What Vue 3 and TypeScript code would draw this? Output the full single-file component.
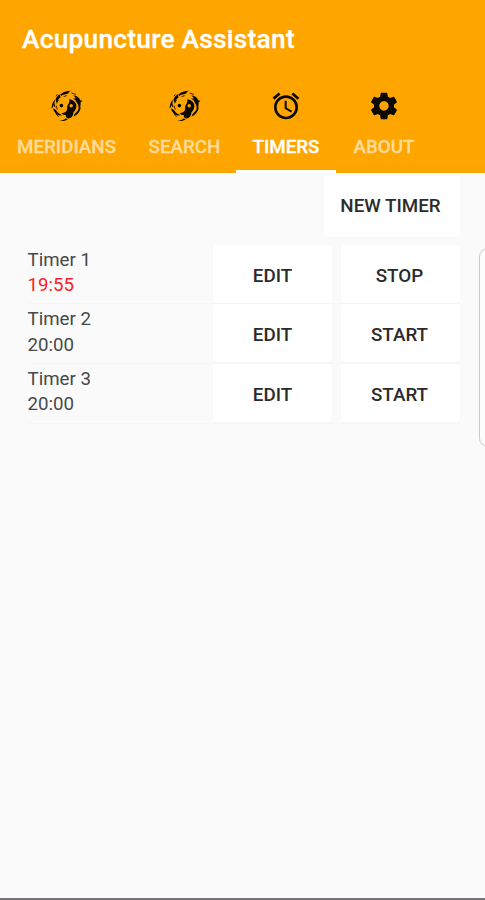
<script setup lang="ts">
import { ref } from 'vue'

type IconName = 'taiji' | 'alarm' | 'gear'

interface Tab {
  id: string
  label: string
  icon: IconName
}

interface Timer {
  name: string
  remaining: string
  running: boolean
}

const tabs: Tab[] = [
  { id: 'meridians', label: 'MERIDIANS', icon: 'taiji' },
  { id: 'search', label: 'SEARCH', icon: 'taiji' },
  { id: 'timers', label: 'TIMERS', icon: 'alarm' },
  { id: 'about', label: 'ABOUT', icon: 'gear' },
]

const activeTab = ref('timers')

const timers = ref<Timer[]>([
  { name: 'Timer 1', remaining: '19:55', running: true },
  { name: 'Timer 2', remaining: '20:00', running: false },
  { name: 'Timer 3', remaining: '20:00', running: false },
])

function addTimer(): void {
  timers.value.push({ name: `Timer ${timers.value.length + 1}`, remaining: '20:00', running: false })
}
</script>

<template>
  <div class="screen">
    <header class="app-bar">
      <h1 class="title">Acupuncture Assistant</h1>
      <nav class="tabs">
        <button
          v-for="tab in tabs"
          :key="tab.id"
          class="tab"
          :class="[tab.id, { active: tab.id === activeTab }]"
          @click="activeTab = tab.id"
        >
          <svg v-if="tab.icon === 'taiji'" class="icon" viewBox="0 0 32 32">
            <path d="M18 9.5C21.5 9.5 24.6 11.6 25.2 14.6C25.8 18 24.4 20.6 22.4 22.4C22.4 25.4 20.6 28 17.6 28.4C15 28.2 14.6 26.4 14.8 25C13 25 11.6 24.6 10.4 23.2C13.8 23.2 16 21.4 16.2 18.8C16.2 17.4 16 16 17 14.4C18.6 12.6 18.8 11 18 9.5Z" />
            <circle class="hole" cx="20.2" cy="15.8" r="1.7" />
            <circle cx="10.4" cy="15.6" r="1.8" />
            <path d="M9.6 4.4C12 2 15.4 1 20.6 0.8C18.2 1.4 17.2 2.4 17.4 3.6C15 4.4 12.6 4.2 9.4 6.4C9.8 5.6 10 5 9.6 4.4Z" />
            <path d="M4.6 9.4C5.4 6.8 7.4 4.6 9.6 4C8.4 5.8 8.8 6.8 10 7C7.6 8.4 6.4 10.2 6.2 12.6C5.2 12 4.6 10.8 4.6 9.4Z" />
            <path d="M0.6 18.6C0.8 14.8 1.8 11.6 4 9.6C3.2 12.6 3.4 15.4 4.6 17.6C3.6 17.2 2.8 16.2 2.4 15C2.2 16.6 1.8 17.8 0.6 18.6Z" />
            <path d="M2 18.4C4.4 19 5.6 20.6 6.4 22C7.6 23.4 9.2 24.4 11.4 25.2L8.2 25.6C5 24.2 2.6 21.6 2 18.4Z" />
            <path d="M22 5.2C25.4 5.4 28.4 7.2 29.2 10.2L31.4 10.8L29.6 12.4C29.8 15.4 29.2 17.4 27.6 19.4C27.8 14.6 26.6 11 21.8 8.6L24.8 8.4C24.2 7 23.4 6 22 5.2Z" />
            <path d="M29 15.6L29.6 18.4C28.4 22.4 26 25 22.6 26.6L23.6 24C26 22 28 19.4 29 15.6Z" />
            <path d="M8.6 30.8C11.4 30.6 13.6 29.8 14.6 28.6L16.8 29C15 30.8 12 31.4 8.6 30.8Z" />
            <path class="wisp" d="M7.6 9.8L5.6 13.4M25.4 11L27.2 14.4M4.8 23.8L7.6 26.8M20.4 3L25 4.4M6.4 4.2L5 6.2M5 15.4L6.4 19.6M12.6 6.6L15.8 5.6" />
          </svg>
          <svg v-else-if="tab.icon === 'alarm'" class="icon" viewBox="0 0 24 24">
            <path d="M22 5.72l-4.6-3.86-1.29 1.53 4.6 3.86L22 5.72zM7.88 3.39L6.6 1.86 2 5.71l1.29 1.53 4.59-3.85zM12.5 8H11v6l4.75 2.85.75-1.23-4-2.37V8zM12 4c-4.97 0-9 4.03-9 9s4.02 9 9 9a9 9 0 0 0 0-18zm0 16c-3.87 0-7-3.13-7-7s3.13-7 7-7 7 3.13 7 7-3.13 7-7 7z" />
          </svg>
          <svg v-else class="icon" viewBox="0 0 24 24">
            <path d="M19.43 12.98c.04-.32.07-.64.07-.98s-.03-.66-.07-.98l2.11-1.65c.19-.15.24-.42.12-.64l-2-3.46c-.12-.22-.39-.3-.61-.22l-2.49 1c-.52-.4-1.08-.73-1.69-.98l-.38-2.65C14.46 2.18 14.25 2 14 2h-4c-.25 0-.46.18-.49.42l-.38 2.65c-.61.25-1.17.59-1.69.98l-2.49-1c-.23-.09-.49 0-.61.22l-2 3.46c-.13.22-.07.49.12.64l2.11 1.65c-.04.32-.07.65-.07.98s.03.66.07.98l-2.11 1.65c-.19.15-.24.42-.12.64l2 3.46c.12.22.39.3.61.22l2.49-1c.52.4 1.08.73 1.69.98l.38 2.65c.03.24.24.42.49.42h4c.25 0 .46-.18.49-.42l.38-2.65c.61-.25 1.17-.59 1.69-.98l2.49 1c.23.09.49 0 .61-.22l2-3.46c.12-.22.07-.49-.12-.64l-2.11-1.65zM12 15.5c-1.93 0-3.5-1.57-3.5-3.5s1.57-3.5 3.5-3.5 3.5 1.57 3.5 3.5-1.57 3.5-3.5 3.5z" />
          </svg>
          <span class="tab-label">{{ tab.label }}</span>
        </button>
      </nav>
    </header>

    <main class="content">
      <div class="toolbar">
        <button class="btn new-timer" @click="addTimer">NEW TIMER</button>
      </div>
      <ul class="timers">
        <li v-for="timer in timers" :key="timer.name" class="timer">
          <div class="info">
            <span class="name">{{ timer.name }}</span>
            <span class="time" :class="{ running: timer.running }">{{ timer.remaining }}</span>
          </div>
          <button class="btn">EDIT</button>
          <button class="btn toggle" @click="timer.running = !timer.running">
            {{ timer.running ? 'STOP' : 'START' }}
          </button>
        </li>
      </ul>
      <div class="edge-panel"></div>
    </main>
  </div>
</template>

<style>
body {
  background: #fafafa;
}
</style>

<style scoped>
.screen {
  box-sizing: border-box;
  display: flex;
  flex-direction: column;
  height: 900px;
  overflow: hidden;
  background: #fafafa;
  border-bottom: 2px solid #77757a;
  font-family: Roboto, "Liberation Sans", sans-serif;
}

button {
  margin: 0;
  padding: 0;
  border: 0;
  font-family: inherit;
}

.app-bar {
  display: flex;
  flex-direction: column;
  height: 172.5px;
  flex: none;
  background: #ffa500;
}

.title {
  margin: 0;
  padding: 0 22px;
  height: 79px;
  line-height: 79px;
  font-size: 26.3px;
  font-weight: 500;
  letter-spacing: 0.25px;
  color: #fff;
  -webkit-text-stroke: 0.3px #fff;
}

.tabs {
  display: flex;
  flex: 1;
}

.tab {
  box-sizing: border-box;
  display: flex;
  flex-direction: column;
  align-items: center;
  padding-top: 11px;
  background: transparent;
  border-bottom: 3.5px solid transparent;
  color: #ffdb99;
}

.meridians {
  width: 133px;
}

.search {
  width: 103px;
}

.timers.tab,
.tab.active {
  width: 100px;
}

.about {
  width: 96px;
}

.tab.active {
  border-bottom-color: #fff;
  color: #fff;
}

.icon {
  width: 32px;
  height: 32px;
  fill: #0a0800;
}

.hole {
  fill: #ffa500;
}

.wisp {
  fill: none;
  stroke: #0a0800;
  stroke-width: 0.8;
}

.tab-label {
  margin-top: 13px;
  line-height: 24px;
  font-size: 18.8px;
  font-weight: 500;
  white-space: nowrap;
  -webkit-text-stroke: 0.3px currentColor;
}

.content {
  position: relative;
  flex: 1;
  padding: 3px 25px 0 28px;
}

.toolbar {
  display: flex;
  justify-content: flex-end;
  height: 69px;
}

.btn {
  height: 58px;
  padding-top: 4px;
  border-radius: 4px;
  background: #fff;
  box-shadow: 0 1px 3px rgba(0, 0, 0, 0.02);
  color: #2b2b2b;
  font-size: 18.8px;
  font-weight: 500;
}

.toggle {
  padding-right: 2px;
}

.new-timer {
  width: 136px;
  height: 61px;
  padding: 0 3px 0 0;
}

ul.timers {
  margin: 0;
  padding: 0;
  list-style: none;
}

.timer {
  box-sizing: border-box;
  display: grid;
  grid-template-columns: 1fr 119px 119px;
  column-gap: 9px;
  height: 59.7px;
  border-bottom: 1px solid #f6f6f6;
}

.info {
  display: flex;
  flex-direction: column;
  margin-left: -0.5px;
  font-size: 18.7px;
  line-height: 25.5px;
  color: #484848;
  padding-top: 3px;
}

.running {
  color: #fa1d24;
}

.edge-panel {
  position: absolute;
  top: 75px;
  right: -13px;
  width: 17px;
  height: 197px;
  border: 1px solid #c8c8c8;
  border-radius: 9px;
  background: #fcfcfc;
}
</style>
